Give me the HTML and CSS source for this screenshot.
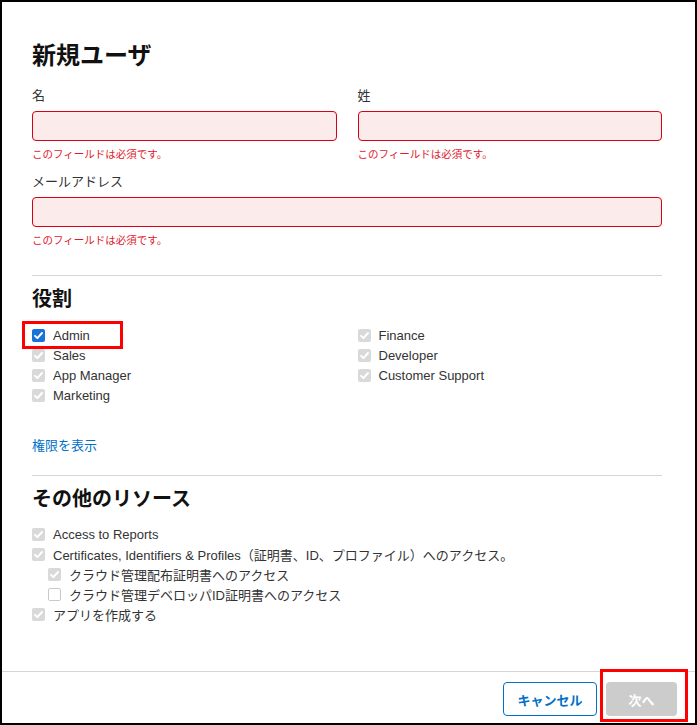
FILE: index.html
```html
<!DOCTYPE html>
<html lang="ja">
<head>
    <meta charset="UTF-8">
    <meta name="viewport" content="width=device-width, initial-scale=1.0">
    <title>新規ユーザ</title>
    <link rel="stylesheet" href="styles.css">
</head>
<body>

    <div class="dialog">
        <div class="dialog-body">
            <h1>新規ユーザ</h1>

            <div class="field-row">
                <div class="field">
                    <label class="field-label">名</label>
                    <input class="text-input invalid" type="text">
                    <div class="field-error">このフィールドは必須です。</div>
                </div>
                <div class="field">
                    <label class="field-label">姓</label>
                    <input class="text-input invalid" type="text">
                    <div class="field-error">このフィールドは必須です。</div>
                </div>
            </div>

            <div class="field field-email">
                <label class="field-label">メールアドレス</label>
                <input class="text-input invalid" type="email">
                <div class="field-error">このフィールドは必須です。</div>
            </div>

            <hr class="divider">

            <h2>役割</h2>
            <div class="roles">
                <div class="role-col">
                    <div class="check admin-check">
                        <span class="box on"><svg viewBox="0 0 13 13"><path d="M3 6.8 L5.4 9.2 L10 4" /></svg></span>
                        Admin
                        <span class="mark mark-admin"></span>
                    </div>
                    <div class="check"><span class="box locked"><svg viewBox="0 0 13 13"><path d="M3 6.8 L5.4 9.2 L10 4" /></svg></span>Sales</div>
                    <div class="check"><span class="box locked"><svg viewBox="0 0 13 13"><path d="M3 6.8 L5.4 9.2 L10 4" /></svg></span>App Manager</div>
                    <div class="check"><span class="box locked"><svg viewBox="0 0 13 13"><path d="M3 6.8 L5.4 9.2 L10 4" /></svg></span>Marketing</div>
                </div>
                <div class="role-col">
                    <div class="check"><span class="box locked"><svg viewBox="0 0 13 13"><path d="M3 6.8 L5.4 9.2 L10 4" /></svg></span>Finance</div>
                    <div class="check"><span class="box locked"><svg viewBox="0 0 13 13"><path d="M3 6.8 L5.4 9.2 L10 4" /></svg></span>Developer</div>
                    <div class="check"><span class="box locked"><svg viewBox="0 0 13 13"><path d="M3 6.8 L5.4 9.2 L10 4" /></svg></span>Customer Support</div>
                </div>
            </div>

            <a class="link" href="#">権限を表示</a>

            <hr class="divider divider-resources">

            <h2>その他のリソース</h2>
            <div class="resources">
                <div class="check"><span class="box locked"><svg viewBox="0 0 13 13"><path d="M3 6.8 L5.4 9.2 L10 4" /></svg></span>Access to Reports</div>
                <div class="check"><span class="box locked"><svg viewBox="0 0 13 13"><path d="M3 6.8 L5.4 9.2 L10 4" /></svg></span>Certificates, Identifiers &amp; Profiles（証明書、ID、プロファイル）へのアクセス。</div>
                <div class="check sub"><span class="box locked"><svg viewBox="0 0 13 13"><path d="M3 6.8 L5.4 9.2 L10 4" /></svg></span>クラウド管理配布証明書へのアクセス</div>
                <div class="check sub"><span class="box empty"></span>クラウド管理デベロッパID証明書へのアクセス</div>
                <div class="check"><span class="box locked"><svg viewBox="0 0 13 13"><path d="M3 6.8 L5.4 9.2 L10 4" /></svg></span>アプリを作成する</div>
            </div>
        </div>

        <div class="dialog-footer">
            <button class="btn btn-cancel">キャンセル</button>
            <div class="next-wrap">
                <button class="btn btn-next" disabled>次へ</button>
                <span class="mark mark-next"></span>
            </div>
        </div>
    </div>

</body>
</html>
```

FILE: styles.css
```css
* {
    box-sizing: border-box;
}

body {
    margin: 0;
    font-family: 'Liberation Sans', 'Noto Sans CJK JP', sans-serif;
    color: #333;
    background: #fff;
}

.dialog {
    width: 697px;
    height: 725px;
    border: 2px solid #000;
    display: flex;
    flex-direction: column;
}

.dialog-body {
    flex: 1;
    padding: 38px 33px 0 30px;
}

h1 {
    margin: 0;
    font-size: 24px;
    line-height: 32px;
    font-weight: bold;
    color: #111;
}

h2 {
    margin: 0;
    font-size: 20px;
    line-height: 28px;
    font-weight: bold;
    color: #111;
}

/* name fields */
.field-row {
    display: grid;
    grid-template-columns: 1fr 1fr;
    column-gap: 21px;
    margin-top: 15px;
}

.field-label {
    display: block;
    font-size: 13px;
    line-height: 18px;
    color: #333;
}

.text-input {
    display: block;
    width: 100%;
    height: 30px;
    margin-top: 6px;
    border: 1px solid #ccc;
    border-radius: 4px;
    font: inherit;
    background: #fff;
}

.text-input.invalid {
    border-color: #d70015;
    background: #fbebeb;
}

.field-error {
    margin-top: 6px;
    font-size: 10.5px;
    line-height: 14px;
    color: #e0182d;
}

.field-email {
    margin-top: 12px;
}

.divider {
    margin: 28px 0 0;
    border: 0;
    border-top: 1px solid #d6d6d6;
}

.divider + h2 {
    margin-top: 9px;
}

/* checkboxes */
.roles {
    display: grid;
    grid-template-columns: 1fr 1fr;
    column-gap: 21px;
    margin-top: 12px;
}

.check {
    position: relative;
    display: flex;
    align-items: center;
    gap: 8px;
    height: 20px;
    font-size: 13px;
    color: #333;
}

.check.sub {
    padding-left: 16px;
}

.box {
    flex: none;
    width: 13px;
    height: 13px;
    border-radius: 2px;
}

.box svg {
    display: block;
    width: 13px;
    height: 13px;
    fill: none;
    stroke: #fff;
    stroke-width: 1.9;
    stroke-linecap: round;
    stroke-linejoin: round;
}

.box.on {
    background: #1a73d9;
}

.box.locked {
    background: #d9d9d9;
}

.box.empty {
    border: 1px solid #c9c9c9;
    background: #fff;
}

.link {
    display: inline-block;
    margin-top: 32px;
    font-size: 13px;
    line-height: 18px;
    color: #0070c9;
    text-decoration: none;
}

.divider-resources {
    margin-top: 20px;
}

.resources {
    margin-top: 11px;
}

/* red highlight frames drawn over the controls */
.mark {
    position: absolute;
    border: 3px solid #f00;
    pointer-events: none;
}

.mark-admin {
    left: -10px;
    top: -4px;
    width: 101px;
    height: 28px;
}

/* footer */
.dialog-footer {
    display: flex;
    justify-content: flex-end;
    align-items: center;
    gap: 9px;
    border-top: 1px solid #d6d6d6;
    padding: 10px 18px 7px;
}

.btn {
    height: 34px;
    border-radius: 4px;
    font-family: inherit;
    font-size: 13px;
    font-weight: bold;
    cursor: pointer;
}

.btn-cancel {
    width: 94px;
    border: 1px solid #0070c9;
    background: #fff;
    color: #0070c9;
}

.next-wrap {
    position: relative;
}

.btn-next {
    display: block;
    width: 71px;
    border: 0;
    background: #cccccc;
    color: #fff;
    cursor: default;
}

.mark-next {
    left: -6px;
    top: -13px;
    width: 88px;
    height: 53px;
}
```
